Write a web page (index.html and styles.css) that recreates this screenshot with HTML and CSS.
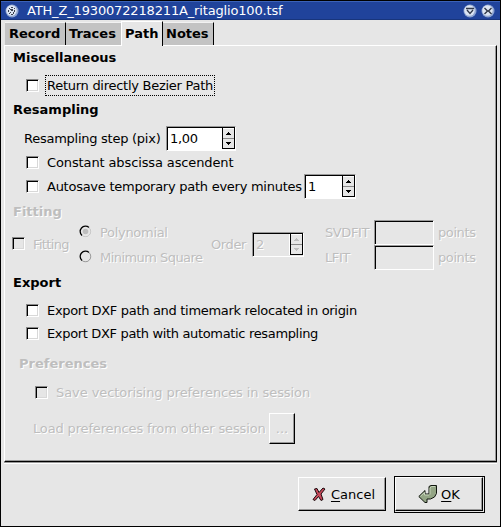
FILE: index.html
```html
<!DOCTYPE html>
<html lang="en">
<head>
<meta charset="utf-8">
<title>ATH_Z_1930072218211A_ritaglio100.tsf</title>
<link rel="stylesheet" href="styles.css">
</head>
<body>
<div class="window">
  <header class="titlebar">
    <svg class="orb" width="14" height="14" viewBox="0 0 14 14"><circle cx="7" cy="7" r="6.5" fill="#8da4d1"/><circle cx="6.5" cy="6.5" r="5.2" fill="#dce5f3"/><path d="M4 4h1v1H4zM6 3h2v1H6zM9 4h1v1H9zM5 5h3v1H5zM3 6h1v2H3zM6 6h2v1H6zM9 6h1v2H9zM5 8h1v1H5zM8 8h1v2H8zM4 9h1v1H4zM6 10h2v1H6z" fill="#39404f"/></svg>
    <span class="title">ATH_Z_1930072218211A_ritaglio100.tsf</span>
    <svg class="orb" width="14" height="14" viewBox="0 0 14 14"><circle cx="7" cy="7" r="6.5" fill="#8da4d1"/><circle cx="6.5" cy="6.5" r="5.2" fill="#dce5f3"/><path d="M3 4.5h8M4 6l3 3.4L10 6" fill="none" stroke="#303848" stroke-width="1.3"/></svg>
    <svg class="orb" width="14" height="14" viewBox="0 0 14 14"><circle cx="7" cy="7" r="6.5" fill="#8da4d1"/><circle cx="6.5" cy="6.5" r="5.2" fill="#dce5f3"/><path d="M3.500 4l3 3-3 3M10.500 4l-3 3 3 3M5.500 7h3" fill="none" stroke="#303848" stroke-width="1.4"/></svg>
  </header>
  <nav class="tabs">
    <div class="tab record">Record</div>
    <div class="tab traces">Traces</div>
    <div class="tab path active">Path</div>
    <div class="tab notes">Notes</div>
  </nav>
  <main class="page">
    <h2 class="h-misc">Miscellaneous</h2>
    <div class="row return"><i class="check"></i><span class="focus">Return directly Bezier Path</span></div>
    <h2 class="h-resampling">Resampling</h2>
    <div class="row step"><span class="t-step">Resampling step (pix)</span>
      <div class="spin wide"><span>1,00</span><div class="arrows"><b><svg width="5" height="3"><path d="M2 0h1v1h1v1h1v1H0V2h1V1h1z"/></svg></b><b><svg width="5" height="3"><path d="M0 0h5v1H4v1H3v1H2V2H1V1H0z"/></svg></b></div></div>
    </div>
    <div class="row constant"><i class="check"></i><span class="label">Constant abscissa ascendent</span></div>
    <div class="row autosave"><i class="check"></i><span class="label t-auto">Autosave temporary path every minutes</span>
      <div class="spin"><span>1</span><div class="arrows"><b><svg width="5" height="3"><path d="M2 0h1v1h1v1h1v1H0V2h1V1h1z"/></svg></b><b><svg width="5" height="3"><path d="M0 0h5v1H4v1H3v1H2V2H1V1H0z"/></svg></b></div></div>
    </div>
    <h2 class="h-fitting off">Fitting</h2>
    <div class="fitting off">
      <div class="fit-toggle"><i class="check"></i><span>Fitting</span></div>
      <div class="radios">
        <div><svg width="13" height="13" viewBox="0 0 13 13"><circle cx="6.500" cy="6.500" r="5.500" fill="none" stroke="#fff"/><path d="M3 10.500A5.300 5.300 0 0 1 10 2.500" fill="none" stroke="#000" stroke-width="1.300"/><path d="M10 2.500A5.300 5.300 0 0 1 3 10.500" fill="none" stroke="#aaa" stroke-width=".7"/><circle cx="6.500" cy="6.500" r="2.800" fill="#bebebe"/></svg><span class="t-poly">Polynomial</span></div>
        <div><svg width="13" height="13" viewBox="0 0 13 13"><circle cx="6.500" cy="6.500" r="5.500" fill="none" stroke="#fff"/><path d="M3 10.500A5.300 5.300 0 0 1 10 2.500" fill="none" stroke="#000" stroke-width="1.300"/><path d="M10 2.500A5.300 5.300 0 0 1 3 10.500" fill="none" stroke="#777" stroke-width=".8"/></svg><span class="t-square">Minimum Square</span></div>
      </div>
      <div class="order"><span>Order</span>
        <div class="spin"><span>2</span><div class="arrows"><b><svg width="5" height="3"><path d="M2 0h1v1h1v1h1v1H0V2h1V1h1z"/></svg></b><b><svg width="5" height="3"><path d="M0 0h5v1H4v1H3v1H2V2H1V1H0z"/></svg></b></div></div>
      </div>
      <div class="points">
        <span>SVDFIT</span><i class="entry"></i><span>points</span>
        <span>LFIT</span><i class="entry"></i><span>points</span>
      </div>
    </div>
    <h2 class="h-export">Export</h2>
    <div class="row export1"><i class="check"></i><span class="label">Export DXF path and timemark relocated in origin</span></div>
    <div class="row export2"><i class="check"></i><span class="label">Export DXF path with automatic resampling</span></div>
    <h2 class="h-prefs off">Preferences</h2>
    <div class="row save off"><i class="check"></i><span class="label">Save vectorising preferences in session</span></div>
    <div class="row load off"><span class="t-load">Load preferences from other session</span><div class="button more">...</div></div>
  </main>
  <footer class="actions">
    <div class="button cancel"><svg width="14" height="15" viewBox="0 0 14 15"><path d="M2.500 2L5 1.500l2 4L11 1l2 1-4 5 2 5.500-2 1-2.500-4L3 13.500l-2-1L5 7.500z" fill="#c9495b" stroke="#1b0a0d"/></svg><span class="t-cancel"><u>C</u>ancel</span></div>
    <div class="default"><div class="button ok"><svg width="20" height="18" viewBox="0 0 20 18"><path d="M11 1.500l2-1h5.500v8l-2 3.500-4 2H9v3.500H7L.8 11.500l6.200-6V9h4z" fill="#93a585" stroke="#10150e"/><path d="M12 9.500V3l1.500-1.500H17M2.500 11.300L6.500 7.500v2.500H11" fill="none" stroke="#c5d3b9"/></svg><span class="t-ok"><u>O</u>K</span></div></div>
  </footer>
</div>
</body>
</html>
```

FILE: styles.css
```css
* { box-sizing: border-box; }
body {
  margin: 0;
  background: #000;
  font: 13px/16px "DejaVu Sans", sans-serif;
  color: #000;
  white-space: nowrap;
}
.window {
  width: 501px;
  height: 527px;
  border: 1px solid #000;
  background: #e6e6e6;
}
.titlebar {
  height: 19px;
  display: flex;
  align-items: center;
  gap: 4px;
  padding: 1px 5px 0 4px;
  background: #20439b;
  border-top: 1px solid #3b62b8;
  border-bottom: 1px solid #18357c;
  color: #fff;
}
.title { flex: 1; margin: -1px 0 0 4px; letter-spacing: -0.16px; }
.orb { flex: none; }
.tabs {
  height: 25px;
  display: flex;
  align-items: flex-end;
  padding-left: 4px;
  font-weight: bold;
}
.tab {
  height: 23px;
  padding: 3px 0 0 4px;
  background: #c3c3c3;
  border-top: 1px solid #f2f2f2;
  border-right: 1px solid #000;
}
.record { width: 61px; }
.traces { width: 55px; padding-left: 3px; border-right: 0; }
.path.active {
  width: 42px;
  height: 25px;
  margin-bottom: -1px;
  padding: 4px 0 0 3px;
  background: #e6e6e6;
  border-left: 1px solid #fff;
  border-top-color: #fff;
  z-index: 1;
}
.notes { width: 51px; padding-left: 3px; }
.page {
  width: 493px;
  height: 417px;
  margin-left: 3px;
  border: 1px solid;
  border-color: #fff #000 #000 #fff;
  box-shadow: inset -1px -1px #999, 0 1px #999, 0 2px #fff;
}
h2 {
  margin: 0 0 0 8px;
  height: 18px;
  font-size: 13px;
  line-height: 18px;
}
.h-misc { margin-top: 3px; }
.row { display: flex; align-items: center; }
.check {
  flex: none;
  width: 13px;
  height: 13px;
  border: 1px solid;
  border-color: #888 #fff #fff #888;
  background: #fff;
  box-shadow: inset 1px 1px #000, inset -1px -1px #d8d8d8;
}
.return { height: 21px; margin: 8px 0 0 21px; }
.return .check { margin-top: -1px; }
.focus { width: 170px; height: 21px; margin-left: 6px; padding: 2px 0 0 1px; border: 1px dotted #000; letter-spacing: -0.27px; }
.h-resampling { margin-top: 5px; }
.step { height: 25px; margin: 7px 0 0 19px; }
.t-step { width: 142px; letter-spacing: -0.26px; }
.constant { height: 20px; margin: 1px 0 0 21px; letter-spacing: -0.12px; }
.constant .label { margin-top: 1px; }
.label { margin-left: 8px; }
.autosave { height: 25px; margin: 2px 0 0 21px; }
.t-auto { width: 257px; letter-spacing: -0.26px; }
.spin {
  width: 52px;
  height: 25px;
  display: flex;
  justify-content: space-between;
  padding: 1px 0 1px 2px;
  border: 1px solid;
  border-color: #999 #fff #fff #999;
  background: #fff;
  box-shadow: inset 1px 1px #000;
  letter-spacing: 0;
}
.spin > span { padding: 3px 0 0 1px; }
.wide { width: 70px; }
.wide > span { letter-spacing: -0.3px; }
.arrows { width: 13px; display: flex; flex-direction: column; border: 1px solid #000; border-top: 0; }
.arrows b { flex: 1; display: flex; align-items: center; justify-content: center; background: #e6e6e6; border-top: 1px solid #fff; }
.arrows b + b { border-top: 1px solid #888; }
.arrows svg { fill: currentColor; }
.off { color: #bebebe; text-shadow: 1px 1px #fff; }
.off .check, .off .spin { background: #e6e6e6; }
.h-fitting { margin-top: 4px; }
.fitting { display: flex; height: 50px; margin-top: -1px; }
.fit-toggle { width: 74px; padding-left: 7px; display: flex; align-items: center; gap: 8px; height: 47px; }
.fit-toggle span { margin-top: 2px; letter-spacing: -0.65px; }
.radios { width: 132px; }
.radios div { height: 25px; display: flex; align-items: center; gap: 8px; }
.radios svg { margin-top: -2px; }
.t-poly { letter-spacing: -0.3px; }
.t-square { letter-spacing: -0.55px; }
.order { width: 114px; display: flex; align-items: center; }
.order > span { width: 41px; letter-spacing: -0.4px; }
.order .spin { margin-top: -1px; }
.order .arrows { box-shadow: -1px 0 #fff; }
.points { display: grid; grid-template-columns: 49px 60px auto; grid-auto-rows: 25px; align-items: center; letter-spacing: -0.4px; }
.points .entry + span { margin-left: 4px; }
.entry { width: 60px; height: 25px; border: 1px solid; border-color: #999 #fff #fff #999; box-shadow: inset 1px 1px #000; }
.h-export { margin-top: 4px; }
.export1 { height: 20px; margin: 8px 0 0 21px; letter-spacing: -0.31px; }
.export2 { height: 20px; margin: 3px 0 0 21px; letter-spacing: -0.34px; }
.export1 .label, .export2 .label { margin-top: 1px; }
.h-prefs { margin: 12px 0 0 14px; }
.save { height: 20px; margin: 9px 0 0 30px; letter-spacing: -0.08px; }
.save .label { margin-top: 2px; }
.load { height: 31px; margin: 11px 0 0 28px; }
.t-load { width: 236px; letter-spacing: -0.15px; }
.button {
  display: flex;
  align-items: center;
  justify-content: center;
  border: 1px solid;
  border-color: #fff #000 #000 #fff;
  box-shadow: inset -1px -1px #999;
}
.more { width: 26px; height: 31px; }
.actions { display: flex; gap: 8px; justify-content: flex-end; padding: 14px 15px 0 0; }
.cancel { width: 88px; height: 34px; margin-top: 1px; padding-left: 3px; gap: 5px; }
.default { width: 91px; height: 37px; border: 1px solid #000; padding: 0 1px 1px 0; }
.ok { height: 34px; gap: 3px; }
.t-cancel, .t-ok { margin-top: 2px; }
u { text-underline-offset: 2px; }
```
